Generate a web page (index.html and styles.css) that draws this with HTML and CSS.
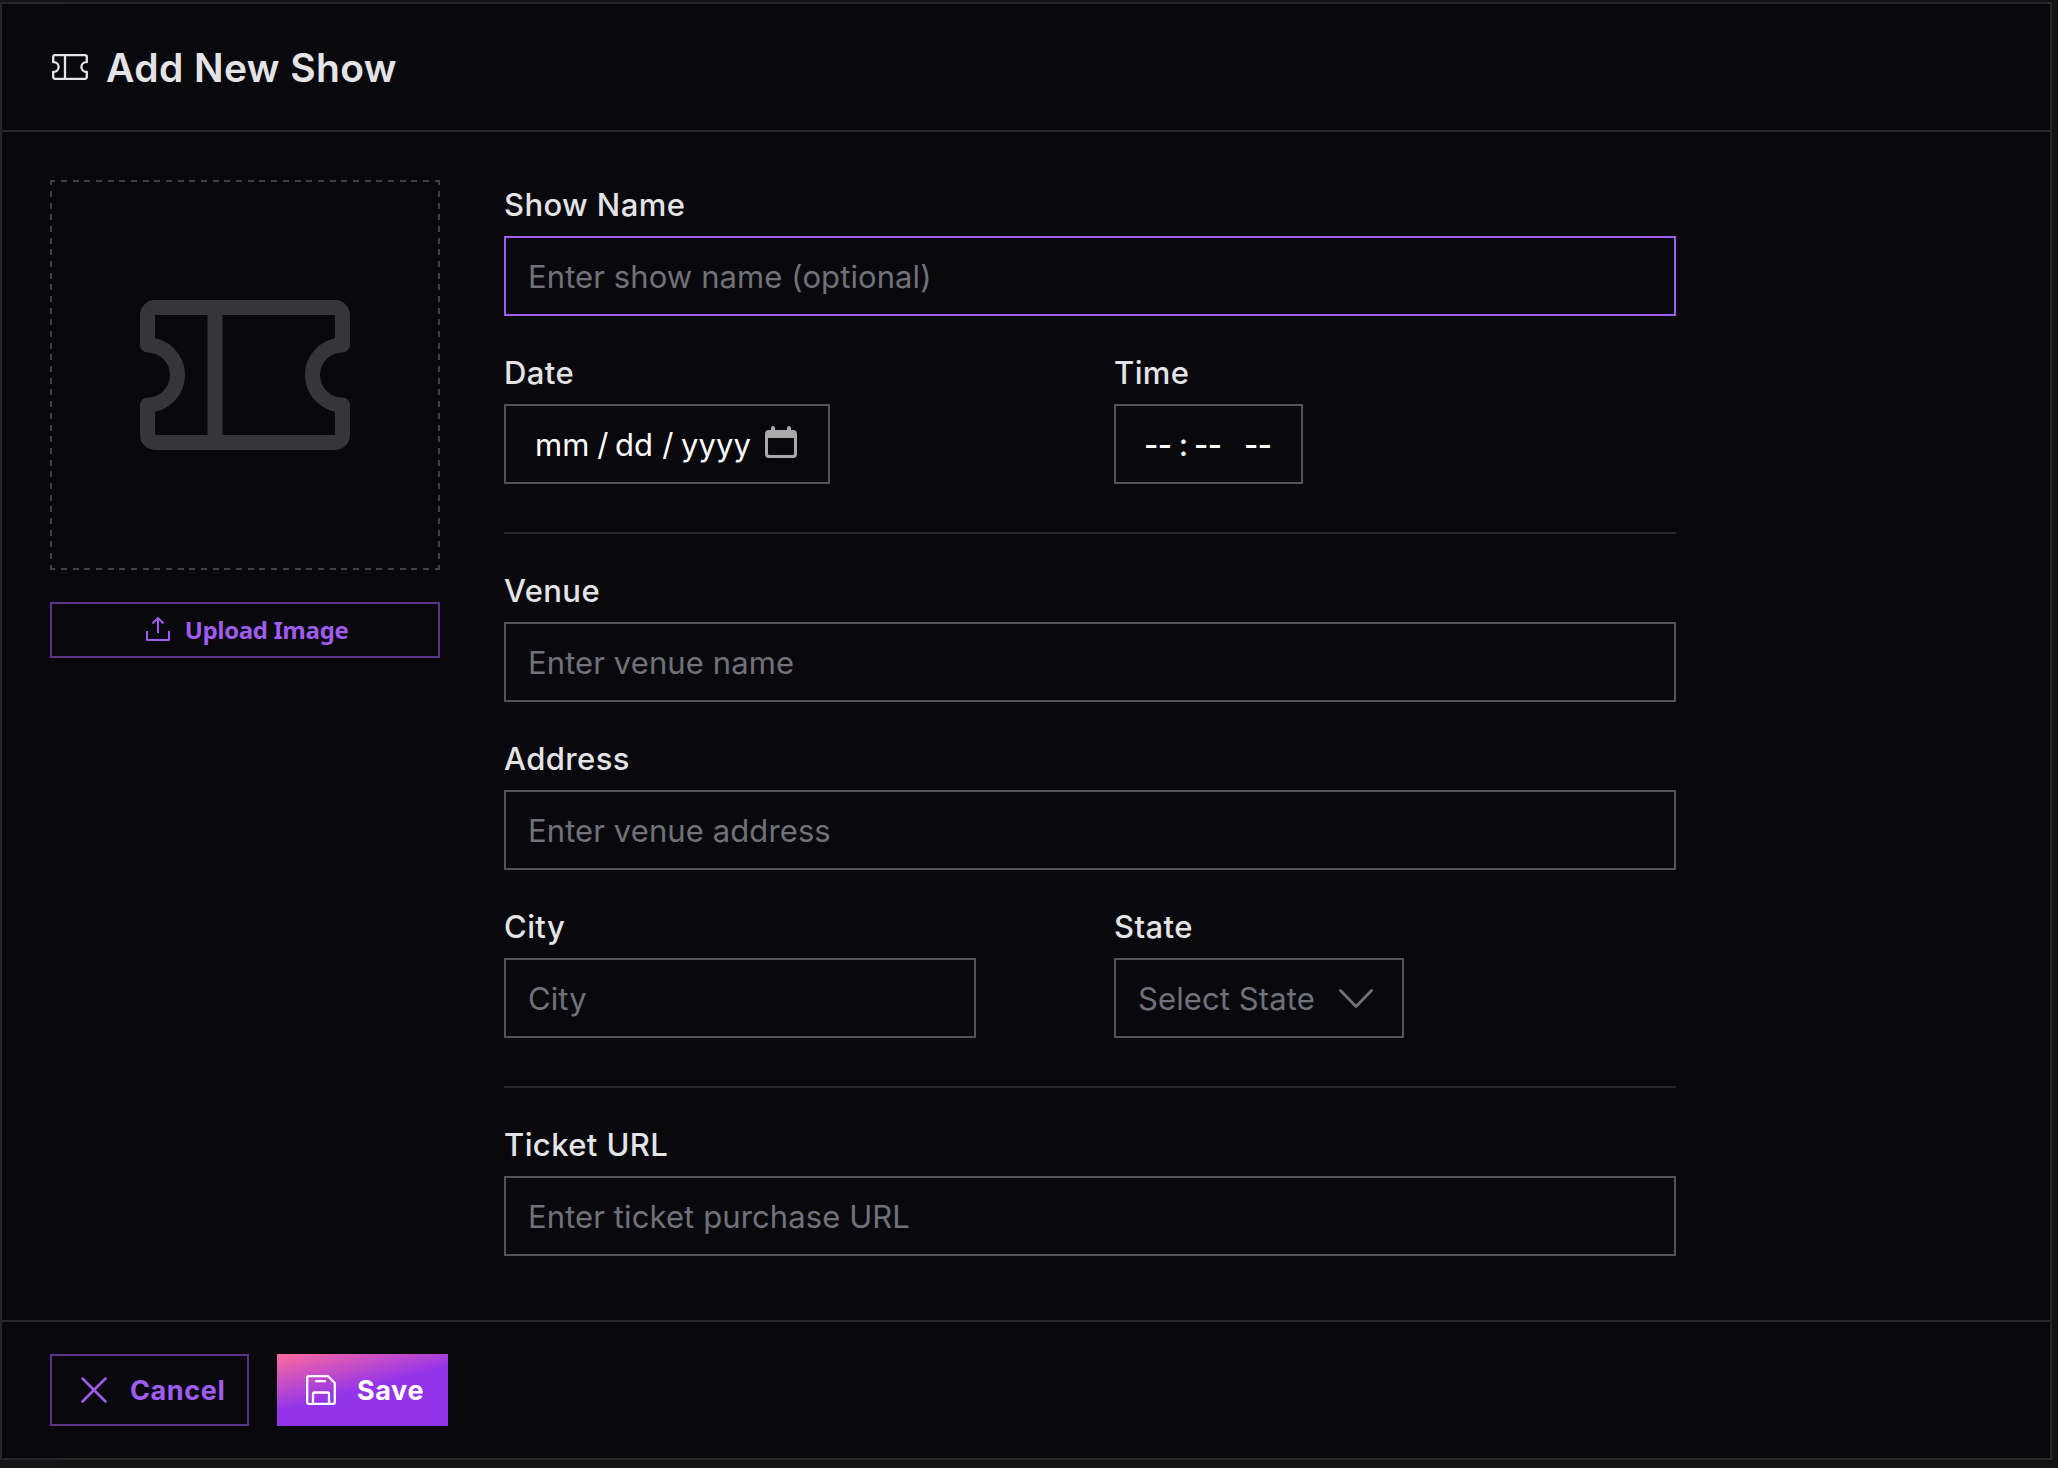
FILE: index.html
```
<!DOCTYPE html>
<html lang="en">
<head>
  <meta charset="UTF-8">
  <meta name="viewport" content="width=device-width, initial-scale=1.0">
  <title>Add New Show</title>
  <link rel="stylesheet" href="styles.css">
</head>
<body>
  <div class="modal">
    <header class="modal-header">
      <svg class="header-icon" width="36" height="26" viewBox="0 0 36 26" fill="none" stroke="currentColor" stroke-width="2.300" stroke-linejoin="round">
        <path d="M3 1.200h30a1.800 1.800 0 0 1 1.800 1.800v5.200h-.6a4.800 4.800 0 0 0 0 9.600h.6V23a1.800 1.800 0 0 1-1.800 1.800H3A1.800 1.800 0 0 1 1.200 23v-5.200h.6a4.800 4.800 0 0 0 0-9.600h-.6V3A1.800 1.800 0 0 1 3 1.200z"/>
        <path d="M13 1v24"/>
      </svg>
      <h1>Add New Show</h1>
    </header>

    <form class="modal-body">
      <div class="image-column">
        <div class="image-drop">
          <svg width="240" height="240" viewBox="0 0 16 16" fill="none" stroke="currentColor" stroke-linejoin="round">
            <path d="M2 3.500h12a.5.5 0 0 1 .5.5v2a2 2 0 0 0 0 4v2a.5.5 0 0 1-.5.5H2a.5.5 0 0 1-.5-.5v-2a2 2 0 0 0 0-4V4a.5.5 0 0 1 .5-.5z"/>
            <path d="M6 3.500v9"/>
          </svg>
        </div>
        <button type="button" class="btn-upload">
          <svg width="24" height="24" viewBox="0 0 24 24" fill="none" stroke="currentColor" stroke-width="2" stroke-linejoin="round">
            <path d="M1 14v9h22v-9M12 16V1.500M6.500 6.500L12 1l5.500 5.500"/>
          </svg>
          <span>Upload Image</span>
        </button>
      </div>

      <div class="fields">
        <div class="form-group">
          <label for="name">Show Name</label>
          <input type="text" id="name" class="control active" placeholder="Enter show name (optional)">
        </div>
        <div class="form-row">
          <div class="form-group">
            <label>Date</label>
            <div class="control date">
              <span class="mm">mm</span><span class="slash">/</span><span class="dd">dd</span><span class="slash">/</span><span class="yyyy">yyyy</span>
              <svg width="32" height="32" viewBox="0 0 32 32" fill="currentColor">
                <path fill-rule="evenodd" d="M6 4V2a2 2 0 0 1 4 0v2h12V2a2 2 0 0 1 4 0v2h2a4 4 0 0 1 4 4v20a4 4 0 0 1-4 4H4a4 4 0 0 1-4-4V8a4 4 0 0 1 4-4zM3 12v15.500a1.500 1.500 0 0 0 1.500 1.500h23a1.500 1.500 0 0 0 1.500-1.500V12z"/>
              </svg>
            </div>
          </div>
          <div class="form-group">
            <label>Time</label>
            <div class="control time">
              <span class="dashes">--</span><span class="colon">:</span><span class="dashes">--</span><span class="dashes ampm">--</span>
            </div>
          </div>
        </div>

        <hr>

        <div class="form-group">
          <label for="venue">Venue</label>
          <input type="text" id="venue" class="control" placeholder="Enter venue name">
        </div>
        <div class="form-group">
          <label for="address">Address</label>
          <input type="text" id="address" class="control" placeholder="Enter venue address">
        </div>
        <div class="form-row">
          <div class="form-group">
            <label for="city">City</label>
            <input type="text" id="city" class="control city" placeholder="City">
          </div>
          <div class="form-group">
            <label>State</label>
            <div class="control state">
              <span>Select State</span>
              <svg width="34" height="20" viewBox="0 0 34 20" fill="none" stroke="currentColor" stroke-width="2.800" stroke-linecap="round" stroke-linejoin="round">
                <path d="M1.500 1.500L17 17.500L32.500 1.500"/>
              </svg>
            </div>
          </div>
        </div>

        <hr>

        <div class="form-group">
          <label for="url">Ticket URL</label>
          <input type="text" id="url" class="control" placeholder="Enter ticket purchase URL">
        </div>
      </div>
    </form>

    <footer class="modal-footer">
      <button type="button" class="btn btn-cancel">
        <svg width="26" height="26" viewBox="0 0 26 26" fill="none" stroke="currentColor" stroke-width="2.500" stroke-linecap="round">
          <path d="M1.500 1.500l23 23M24.500 1.500l-23 23"/>
        </svg>
        <span>Cancel</span>
      </button>
      <button type="button" class="btn btn-save">
        <svg width="30" height="30" viewBox="0 0 30 30" fill="none" stroke="currentColor" stroke-width="2.300" stroke-linecap="round" stroke-linejoin="round">
          <path d="M2.500 1.200H22L28.800 8v19.500a1.300 1.300 0 0 1-1.300 1.300h-25a1.300 1.300 0 0 1-1.300-1.300v-25a1.300 1.300 0 0 1 1.300-1.300z"/>
          <path d="M7 28.800V19a1.500 1.500 0 0 1 1.500-1.500h13A1.500 1.500 0 0 1 23 19v9.800M10 6.200h9"/>
        </svg>
        <span>Save</span>
      </button>
    </footer>
  </div>
</body>
</html>
```
FILE: styles.css
```
* {
  box-sizing: border-box;
}
body {
  margin: 0;
  padding: 2px 6px 8px 0;
  height: 1468px;
  background: linear-gradient(90deg, #161618 58px, #131314 58px);
  color: #e4e4e7;
  font-family: Inter, sans-serif;
  font-size: 31px;
  overflow: hidden;
}
svg {
  display: block;
  flex-shrink: 0;
}
.modal {
  display: flex;
  flex-direction: column;
  height: 1458px;
  background-color: #09090d;
  border: 2px solid #27272a;
}
.modal-header {
  display: flex;
  flex-shrink: 0;
  align-items: center;
  height: 128px;
  padding-left: 50px;
  border-bottom: 2px solid #27272a;
}
h1 {
  margin: 2px 0 0 18px;
  font-size: 39px;
  font-weight: 600;
  letter-spacing: 0.4px;
  line-height: 48px;
}
.modal-body {
  display: flex;
  flex: 1;
  gap: 64px;
  padding: 48px 48px 32px;
}
.image-column {
  width: 390px;
}
.image-drop {
  --dash: #3f3f46 0 5.25px, transparent 5.25px 10.93px, #3f3f46 10.93px 11.68px;
  display: flex;
  align-items: center;
  justify-content: center;
  height: 390px;
  background:
    repeating-linear-gradient(90deg, var(--dash)) top / 100% 2px no-repeat,
    repeating-linear-gradient(90deg, var(--dash)) bottom / 100% 2px no-repeat,
    repeating-linear-gradient(180deg, var(--dash)) left / 2px 100% no-repeat,
    repeating-linear-gradient(180deg, var(--dash)) right / 2px 100% no-repeat;
  color: #363638;
}
.btn-upload {
  display: flex;
  align-items: center;
  justify-content: center;
  gap: 15px;
  width: 100%;
  height: 56px;
  margin-top: 32px;
  padding: 0 0 2px 4px;
  background: none;
  border: 2px solid #5b3388;
  color: #a05cf0;
  font-family: "Open Sans", sans-serif;
  font-size: 24px;
  font-weight: 700;
  font-feature-settings: "ss01";
  letter-spacing: -0.4px;
}
.fields {
  width: 1172px;
}
.form-group {
  margin-bottom: 32px;
}
.form-row {
  display: grid;
  grid-template-columns: 1fr 1fr;
  gap: 48px;
}
label {
  display: block;
  margin-bottom: 7px;
  line-height: 49px;
  font-weight: 450;
  letter-spacing: 0.4px;
}
.control {
  display: flex;
  align-items: center;
  width: 100%;
  height: 80px;
  padding: 0 22px;
  background: none;
  border: 2px solid #52525b;
  border-radius: 0;
  font-family: inherit;
  font-size: 31px;
  letter-spacing: 0.1px;
  color: #71717a;
  outline: none;
}
.control::placeholder {
  color: #71717a;
}
.control.active {
  border-color: #a05cf0;
}
.date {
  width: 326px;
  padding: 0 0 0 29px;
  color: #fff;
}
.date svg {
  margin: -4px 0 0 13px;
  color: #a9a9aa;
}
.mm {
  width: 56px;
}
.slash {
  width: 24px;
  text-align: center;
}
.dd {
  width: 41px;
}
.yyyy {
  width: 71px;
  margin-left: 1px;
}
.time {
  width: 189px;
  padding: 0 0 0 28px;
  color: #fff;
  font-weight: 500;
}
.dashes {
  width: 29px;
  letter-spacing: -0.5px;
}
.colon {
  width: 21px;
  text-align: center;
}
.ampm {
  margin-left: 21px;
}
.city {
  width: 472px;
}
.state {
  justify-content: space-between;
  width: 290px;
  padding-right: 29px;
}
.state svg {
  margin-top: 2px;
}
hr {
  height: 2px;
  margin: 48px 0 32px;
  background-color: #27272a;
  border: none;
}
.form-row + hr {
  margin-top: 16px;
}
.modal-footer {
  display: flex;
  flex-shrink: 0;
  gap: 28px;
  padding: 32px 48px;
  border-top: 2px solid #27272a;
}
.btn {
  display: flex;
  align-items: center;
  height: 72px;
  padding: 0 0 0 29px;
  background: none;
  border: none;
  font-family: inherit;
  font-size: 27px;
  font-weight: 700;
  letter-spacing: 0.6px;
}
.btn-cancel {
  gap: 23px;
  width: 199px;
  border: 2px solid #5b3388;
  color: #a05cf0;
}
.btn-save {
  gap: 21px;
  width: 171px;
  background: linear-gradient(165deg, #ff6b9d 0%, #9333ea 50%);
  color: #fff;
}
```
